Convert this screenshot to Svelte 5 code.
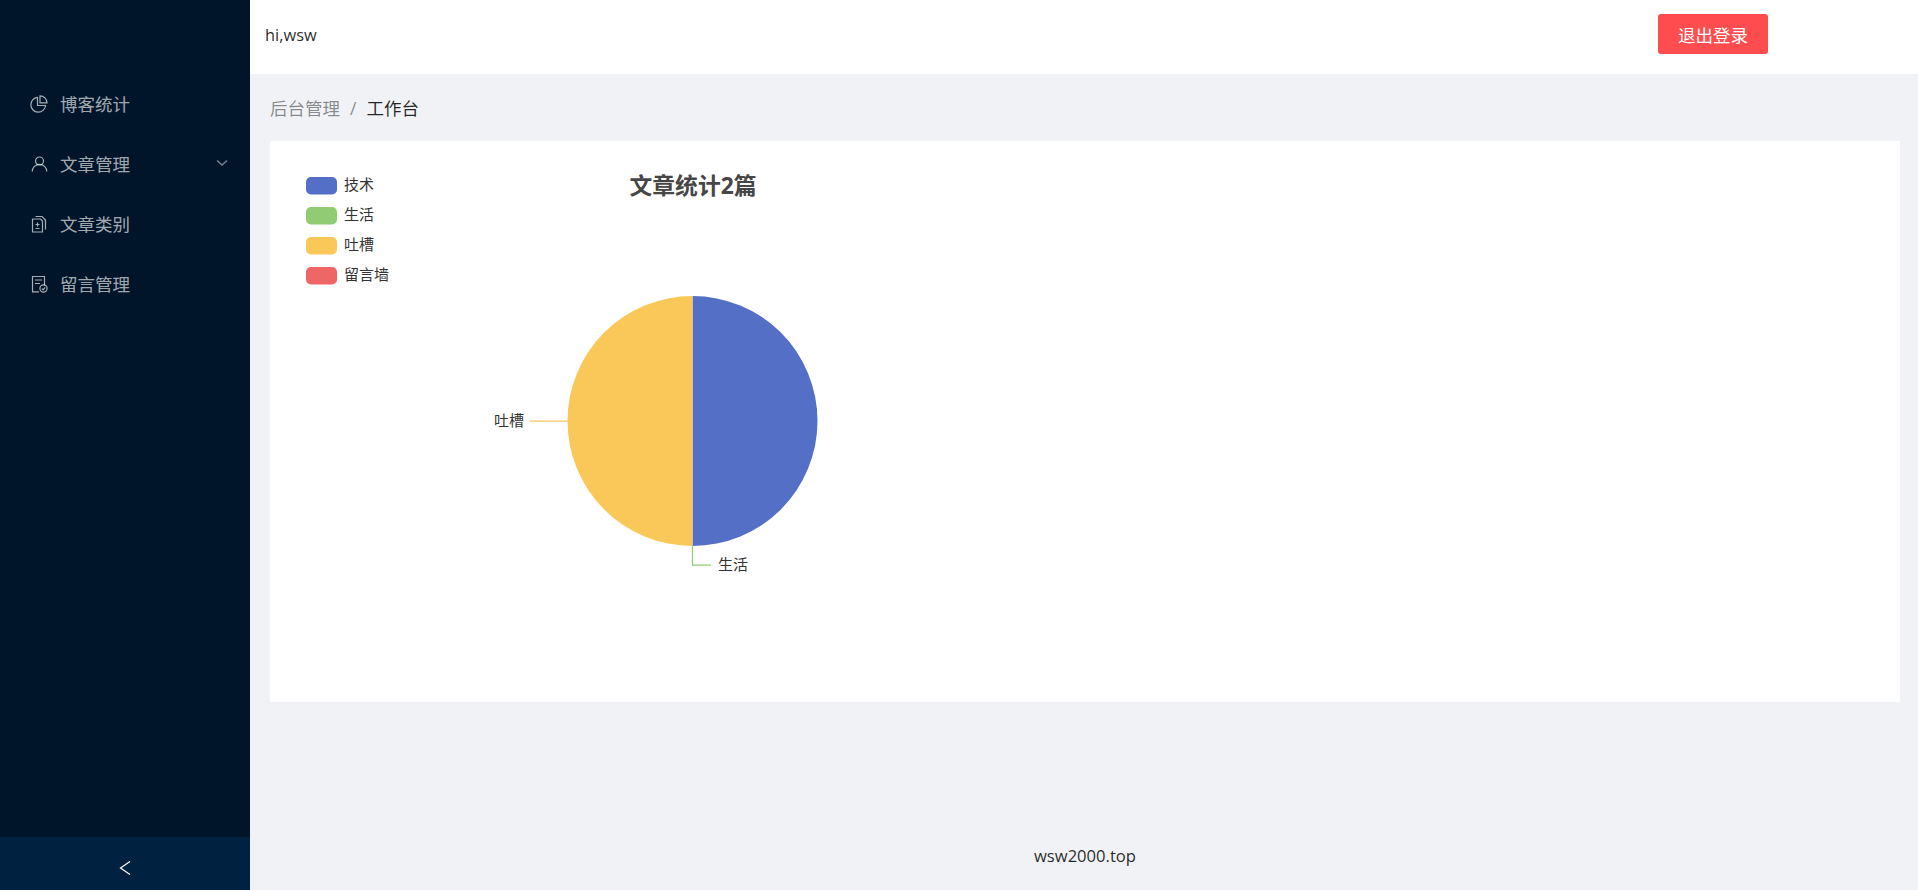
<script>
  const menu = [
    { key: 'stats', label: '博客统计' },
    { key: 'articles', label: '文章管理', arrow: true },
    { key: 'types', label: '文章类别' },
    { key: 'comments', label: '留言管理' },
  ];

  const legend = [
    { name: '技术', color: '#5470c6' },
    { name: '生活', color: '#91cc75' },
    { name: '吐槽', color: '#fac858' },
    { name: '留言墙', color: '#ee6666' },
  ];
</script>

<div class="layout">
  <aside class="sider">
    <nav class="menu">
      {#each menu as item}
        <div class="menu-item">
          <svg class="menu-icon" viewBox="0 0 18 18" fill="none" stroke="currentColor" stroke-width="1.2">
            {#if item.key === 'stats'}
              <path d="M7.5 2.4A7.4 7.4 0 1 0 15.6 10.5H7.5Z" />
              <path d="M10 0.8A7 7 0 0 1 17 7.8H10Z" />
            {:else if item.key === 'articles'}
              <circle cx="9.5" cy="6" r="4" />
              <path d="M2.3 16.5A7.2 7.2 0 0 1 16.7 16.5" />
            {:else if item.key === 'types'}
              <path d="M2.5 4H10.5L12.5 6V17H2.5Z" />
              <path d="M5.5 1.5H12L15.5 5V14.5" />
              <path d="M7.5 7.5V11.5M5.5 9.5H9.5M5.5 13.5H9.5" />
            {:else}
              <path d="M9 16.8H2.5V1.5H14.5V10.5" />
              <path d="M5 5H12M5 8.5H10" />
              <circle cx="13.5" cy="13.5" r="3.6" />
              <path d="M11.8 13.6L13.1 14.8L15.2 12.4" />
            {/if}
          </svg>
          <span>{item.label}</span>
          {#if item.arrow}
            <svg class="menu-arrow" viewBox="0 0 12 8" fill="none" stroke="currentColor" stroke-width="1.6">
              <path d="M1 1.5L6 6L11 1.5" />
            </svg>
          {/if}
        </div>
      {/each}
    </nav>
    <div class="trigger">
      <svg viewBox="0 0 12 16" width="12" height="16" fill="none" stroke="#fff" stroke-width="1.2">
        <path d="M11 1.5L1.5 8L11 14.5" />
      </svg>
    </div>
  </aside>

  <div class="main">
    <header class="header">
      <span class="greeting">hi,wsw</span>
      <button class="logout">退出登录</button>
    </header>

    <div class="content">
      <div class="breadcrumb">
        <span class="crumb">后台管理</span>
        <span class="crumb sep">/</span>
        <span class="crumb current">工作台</span>
      </div>

      <section class="card">
        <svg class="chart" viewBox="0 0 1630 561" width="1630" height="561">
          {#each legend as item, i}
            <rect x="36" y={36 + i * 30} width="31" height="17.5" rx="5" fill={item.color} />
            <text x="74" y={49 + i * 30} class="legend-text">{item.name}</text>
          {/each}

          <text x="359.5" y="53" class="chart-title">文章统计2篇</text>

          <path d="M422.5 155A125 125 0 0 1 422.5 405Z" fill="#5470c6" />
          <path d="M422.5 155A125 125 0 0 0 422.5 405Z" fill="#fac858" />

          <path d="M297.5 280H260" class="leader" stroke="#fac858" />
          <text x="224" y="285" class="slice-label">吐槽</text>

          <path d="M422.5 405V424H441" class="leader" stroke="#91cc75" />
          <text x="448" y="429" class="slice-label">生活</text>
        </svg>
      </section>

      <footer class="footer">wsw2000.top</footer>
    </div>
  </div>
</div>

<style>
  :global(body) {
    font-family: "Open Sans", "Noto Sans CJK SC", sans-serif;
  }

  .layout {
    display: flex;
    height: 890px;
    overflow: hidden;
    background: #f0f2f5;
  }

  .sider {
    flex: 0 0 250px;
    display: flex;
    flex-direction: column;
    justify-content: space-between;
    background: #001529;
  }

  .menu {
    padding-top: 73px;
  }

  .menu-item {
    display: flex;
    align-items: center;
    height: 60px;
    padding-left: 30px;
    color: rgba(255, 255, 255, 0.65);
    font-size: 17.5px;
  }

  .menu-icon {
    width: 18px;
    height: 18px;
    margin-top: 2px;
    margin-right: 12px;
  }

  .menu-arrow {
    width: 12px;
    height: 8px;
    margin-left: auto;
    margin-right: 22px;
    opacity: 0.7;
  }

  .trigger {
    display: flex;
    align-items: center;
    justify-content: center;
    height: 53px;
    padding-top: 9px;
    box-sizing: border-box;
    background: #002140;
  }

  .main {
    flex: 1;
    display: flex;
    flex-direction: column;
    min-width: 0;
  }

  .header {
    display: flex;
    align-items: center;
    height: 74px;
    box-sizing: border-box;
    padding: 0 0 6px 15px;
    background: #fff;
  }

  .greeting {
    color: rgba(0, 0, 0, 0.85);
    font-size: 16.4px;
  }

  .logout {
    width: 110px;
    height: 40px;
    margin-left: auto;
    margin-right: 150px;
    border: none;
    border-radius: 3px;
    background: #ff4d4f;
    color: #fff;
    font-family: inherit;
    font-size: 17.5px;
    box-shadow: 0 2px 0 rgba(0, 0, 0, 0.02);
  }

  .content {
    flex: 1;
    display: flex;
    flex-direction: column;
    padding: 0 18px 0 20px;
  }

  .breadcrumb {
    display: flex;
    align-items: center;
    gap: 10px;
    height: 67px;
    font-size: 17.5px;
  }

  .crumb {
    color: rgba(0, 0, 0, 0.45);
  }

  .crumb.current {
    color: rgba(0, 0, 0, 0.85);
  }

  .card {
    height: 561px;
    background: #fff;
  }

  .chart {
    display: block;
  }

  .legend-text {
    font-size: 15px;
    fill: #333;
  }

  .chart-title {
    font-size: 22.8px;
    font-weight: 700;
    fill: #464646;
  }

  .slice-label {
    font-size: 15px;
    fill: #333;
  }

  .leader {
    fill: none;
    stroke-width: 1.25;
  }

  .footer {
    flex: 1;
    display: flex;
    align-items: center;
    justify-content: center;
    padding-top: 118px;
    color: rgba(0, 0, 0, 0.85);
    font-size: 16.6px;
  }
</style>
